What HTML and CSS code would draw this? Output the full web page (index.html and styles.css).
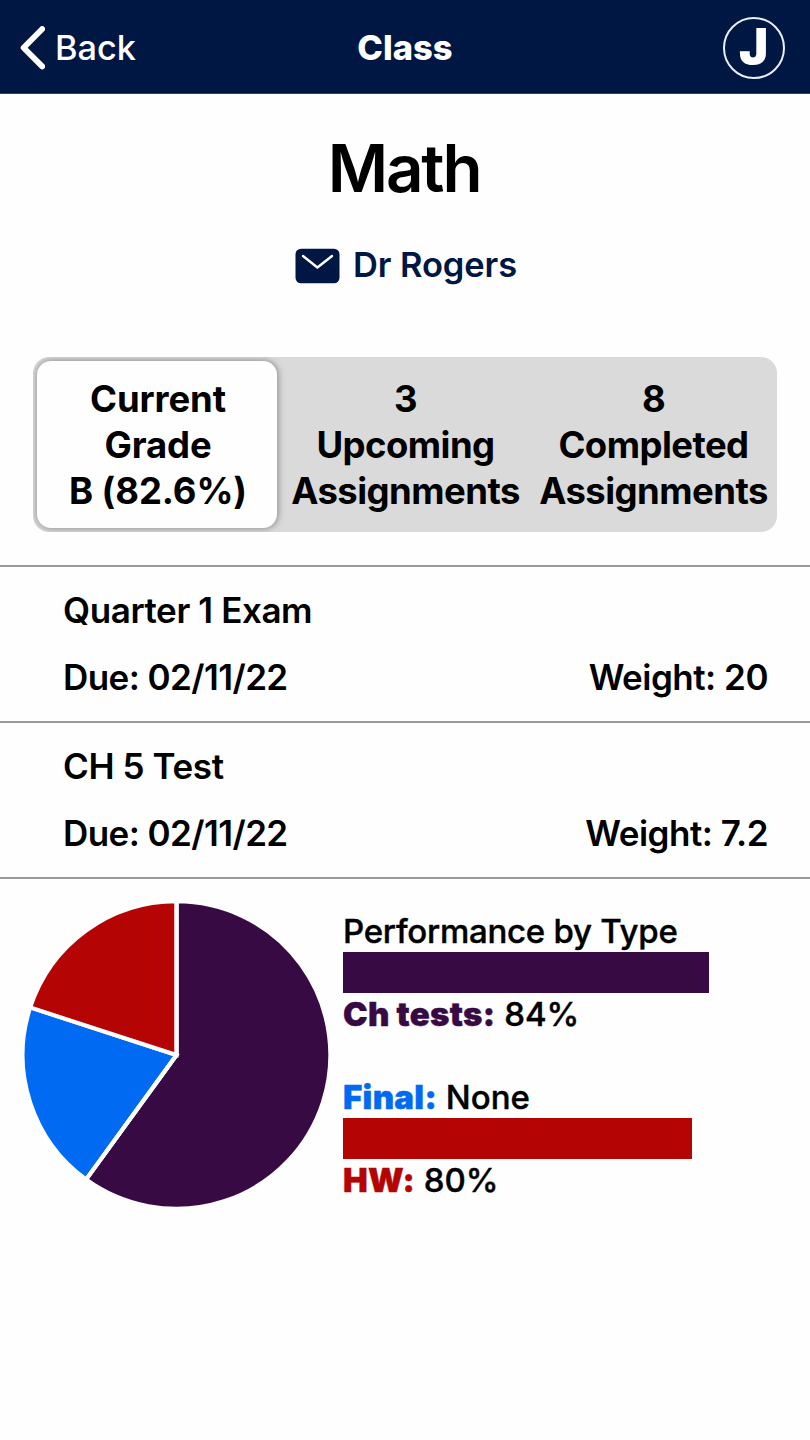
FILE: index.html
```html
<!DOCTYPE html>
<html lang="en">
<head>
<meta charset="utf-8">
<title>Class</title>
<link rel="stylesheet" href="styles.css">
</head>
<body>
<header class="navbar">
  <a class="back">
    <svg class="chevron" width="26" height="44" viewBox="0 0 26 44"><path d="M23.2 3 L4.6 21.8 L23.2 40.4" fill="none" stroke="#fff" stroke-width="5.8" stroke-linecap="round" stroke-linejoin="round"/></svg>
    <span class="back-label">Back</span>
  </a>
  <div class="nav-title"><span>Class</span></div>
  <div class="nav-end"><div class="avatar">J</div></div>
</header>
<main>
  <h1 class="class-name">Math</h1>
  <div class="teacher">
    <svg class="mail" width="45" height="36" viewBox="0 0 45 36"><rect x="0.5" y="0.7" width="44" height="34.6" rx="5.5" fill="#001743"/><path d="M8 8 L22.4 19.5 L37 8" fill="none" stroke="#fff" stroke-width="2.4" stroke-linecap="round" stroke-linejoin="round"/></svg>
    <span class="teacher-name">Dr Rogers</span>
  </div>
  <nav class="tabs">
    <div class="tab active"><span>Current</span><span>Grade</span><span>B (82.6%)</span></div>
    <div class="tab"><span>3</span><span>Upcoming</span><span>Assignments</span></div>
    <div class="tab"><span>8</span><span>Completed</span><span>Assignments</span></div>
  </nav>
  <ul class="list">
    <li class="row">
      <div class="row-title">Quarter 1 Exam</div>
      <div class="row-meta"><span class="due">Due: 02/11/22</span><span class="weight">Weight: 20</span></div>
    </li>
    <li class="row">
      <div class="row-title">CH 5 Test</div>
      <div class="row-meta"><span class="due">Due: 02/11/22</span><span class="weight">Weight: 7.2</span></div>
    </li>
  </ul>
  <section class="performance">
    <svg class="pie" width="309" height="308" viewBox="-154.5 -154 309 308">
      <g stroke="#fefefe" stroke-width="4">
        <path d="M0 0 L0 -153.8 A153.8 153.8 0 1 1 -90.4 124.43 Z" fill="#380a44"/>
        <path d="M0 0 L-90.4 124.43 A153.8 153.8 0 0 1 -146.27 -47.53 Z" fill="#006af3"/>
        <path d="M0 0 L-146.27 -47.53 A153.8 153.8 0 0 1 0 -153.8 Z" fill="#b40404"/>
        <path d="M0 -154 L0 0 L-90.52 124.59" fill="none"/>
      </g>
    </svg>
    <div class="types">
      <div class="line heading">Performance by Type</div>
      <div class="bar tests"></div>
      <div class="line"><b class="c-tests">Ch tests:</b> 84%</div>
      <div class="bar"></div>
      <div class="line"><b class="c-final">Final:</b> None</div>
      <div class="bar hw"></div>
      <div class="line"><b class="c-hw">HW:</b> 80%</div>
    </div>
  </section>
</main>
</body>
</html>
```

FILE: styles.css
```css
* { box-sizing: border-box; }
body {
  margin: 0;
  min-height: 1440px;
  background: #fefefe;
  color: #000;
  font-family: Inter, "Liberation Sans", sans-serif;
  font-weight: 600;
}
.navbar {
  height: 94px;
  padding: 0 25px 0 19px;
  display: grid;
  grid-template-columns: 1fr auto 1fr;
  align-items: center;
  background: #001743;
  border-bottom: 1px solid #35415f;
  color: #fff;
}
.back { display: flex; align-items: center; gap: 10px; padding-top: 2px; }
.back-label { font-size: 34.3px; font-weight: 500; line-height: 44px; }
.nav-title { font-size: 34.5px; font-weight: 800; line-height: 44px; padding: 3px 0 0 6px; }
.nav-end { display: flex; justify-content: flex-end; }
.avatar {
  width: 62px;
  height: 62px;
  margin-top: 3px;
  padding-right: 1px;
  border: 2px solid #e8f0f8;
  border-radius: 50%;
  font-size: 49px;
  font-weight: 900;
  line-height: 56px;
  text-align: center;
}
.class-name {
  margin: 35px 2px 0 0;
  font-size: 65.5px;
  font-weight: 600;
  line-height: 80px;
  letter-spacing: -2.2px;
  text-align: center;
}
.teacher {
  margin-top: 34px;
  padding-left: 2px;
  display: flex;
  justify-content: center;
  align-items: center;
  gap: 13px;
  color: #001743;
}
.mail { margin-top: 1px; }
.teacher-name { font-size: 34.5px; line-height: 44px; letter-spacing: -.1px; }
.tabs {
  margin: 70px 33px 0;
  height: 175px;
  padding: 4px;
  display: grid;
  grid-template-columns: 240px 257px 1fr;
  background: #dadada;
  border-radius: 16px;
  overflow: hidden;
}
.tab {
  padding-top: 15px;
  display: flex;
  flex-direction: column;
  align-items: center;
  font-size: 36.5px;
  font-weight: 700;
  line-height: 46px;
  letter-spacing: -.55px;
  white-space: nowrap;
}
.tab.active {
  padding-left: 2px;
  background: #fefefe;
  border-radius: 14px;
  letter-spacing: -.1px;
  box-shadow: 0 0 4px 2px rgba(0,0,0,.17), 2px 0 8px rgba(0,0,0,.14);
}
.list { list-style: none; margin: 33px 0 0; padding: 0; border-bottom: 2px solid #999; }
.row {
  height: 156px;
  padding: 22px 42px 0 63px;
  border-top: 2px solid #999;
  font-size: 35px;
  line-height: 42px;
  letter-spacing: -.5px;
}
.row-title { letter-spacing: -.4px; }
.due { letter-spacing: -.57px; }
.row-meta { display: flex; justify-content: space-between; margin-top: 25px; }
.performance { display: flex; padding: 22px 0 0 22px; }
.types { flex: 1; padding: 9px 0 0 12px; }
.line {
  height: 42px;
  margin-bottom: -.5px;
  font-size: 33px;
  font-weight: 500;
  line-height: 42px;
  white-space: nowrap;
  -webkit-text-stroke: .4px currentColor;
}
.heading { letter-spacing: -.25px; }
.line b { font-weight: 900; letter-spacing: .3px; }
.bar { height: 41.6px; }
.tests { width: 366px; background: #380a44; }
.hw { width: 349px; background: #b40404; }
.c-tests { color: #380a44; }
.c-final { color: #006af3; }
.c-hw { color: #b40404; }
```
